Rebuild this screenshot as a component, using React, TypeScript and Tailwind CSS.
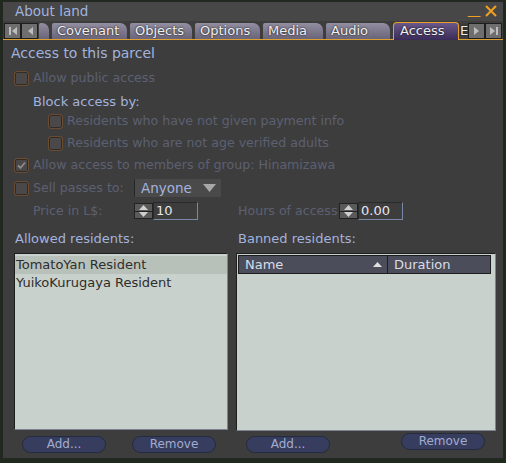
import React from "react";

const font = "font-['DejaVu_Sans',sans-serif]";

function Checkbox({ checked = false }: { checked?: boolean }) {
  return (
    <span className="w-[15px] h-[15px] shrink-0 rounded-[3px] border border-[#6c4c30] bg-[#4a4848] shadow-[inset_0_0_0_1px_#322a24] flex items-center justify-center">
      {checked && (
        <svg width="11" height="11" viewBox="0 0 11 11">
          <path d="M2 5.5 L4.5 8 L9 2.5" stroke="#8c8c8c" strokeWidth="1.8" fill="none" />
        </svg>
      )}
    </span>
  );
}

function Spinner() {
  return (
    <span className="w-[19px] h-[16px] flex flex-col shrink-0 border border-[#222]">
      <span className="flex-1 bg-[#5a5a5a] flex items-center justify-center border-b border-[#222]">
        <svg width="9" height="5" viewBox="0 0 9 5"><path d="M0 5 L4.5 0 L9 5Z" fill="#cfcfcf" /></svg>
      </span>
      <span className="flex-1 bg-[#5a5a5a] flex items-center justify-center">
        <svg width="9" height="5" viewBox="0 0 9 5"><path d="M0 0 L4.5 5 L9 0Z" fill="#cfcfcf" /></svg>
      </span>
    </span>
  );
}

function NumField({ value, w }: { value: string; w: string }) {
  return (
    <span className={`${w} h-[18px] border border-t-[#2a2a2a] border-l-[#2a2a2a] border-b-[#7a88a8] border-r-[#7a88a8] text-[13px] text-[#e6e6ee] pl-[2px] leading-[16px]`}>
      {value}
    </span>
  );
}

function ScrollBtn({ dir, end }: { dir: "l" | "r"; end?: boolean }) {
  return (
    <span className="w-[17px] h-[16px] bg-[#6e6e6e] border border-[#1e1e1e] flex items-center justify-center">
      <svg width="10" height="10" viewBox="0 0 10 10">
        {dir === "l" ? (
          <>
            {end && <rect x="1" y="1" width="2" height="8" fill="#bdbdbd" />}
            <path d={end ? "M9 1 L4 5 L9 9Z" : "M8 1 L3 5 L8 9Z"} fill="#bdbdbd" />
          </>
        ) : (
          <>
            <path d={end ? "M1 1 L6 5 L1 9Z" : "M2 1 L7 5 L2 9Z"} fill="#bdbdbd" />
            {end && <rect x="7" y="1" width="2" height="8" fill="#bdbdbd" />}
          </>
        )}
      </svg>
    </span>
  );
}

function Tab({ label, w, active }: { label: string; w: string; active?: boolean }) {
  if (active) {
    return (
      <span className={`${w} h-[18px] mt-[1px] shrink-0 rounded-t-[4px] border border-b-0 border-[#e8a02a] bg-gradient-to-b from-[#6a5888] to-[#3a2c58] text-[13px] text-[#eeeeee] leading-[16px] pl-[6px] [text-shadow:0_0_2px_#000]`}>
        {label}
      </span>
    );
  }
  return (
    <span className={`${w} h-[16px] mt-[2px] shrink-0 rounded-tr-[7px] rounded-tl-[2px] bg-gradient-to-b from-[#928ea0] to-[#6a6478] text-[13px] text-[#f0f0f0] leading-[16px] pl-[5px] overflow-hidden whitespace-nowrap [text-shadow:0_0_2px_#000]`}>
      {label}
    </span>
  );
}

function PillButton({ label, className = "" }: { label: string; className?: string }) {
  return (
    <span className={`w-[84px] h-[17px] rounded-full bg-[#373d5e] border border-[#262a40] text-[12px] leading-[15px] text-[#a2acd0] text-center ${className}`}>
      {label}
    </span>
  );
}

export default function App() {
  const disabled = "text-[#5c6072] text-[12.6px]";
  const label = "text-[#a3b3de]";
  return (
    <div className={`w-[506px] h-[463px] bg-[#1f2a1c] overflow-hidden ${font}`}>
      <div className="ml-[2px] mt-[1px] w-[502px] h-[458px] bg-[#3d3d3d] border border-[#262626] flex flex-col">
        {/* title bar */}
        <div className="h-[19px] bg-[#474747] flex items-center pl-[12px] pr-[6px]">
          <span className={`text-[13.5px] ${label} flex-1`}>About land</span>
          <span className="text-[#f0a020] text-[14px] leading-none mr-[4px] mt-[6px]">—</span>
          <svg width="12" height="12" viewBox="0 0 12 12" className="mb-[1px]">
            <path d="M1 1 L11 11 M11 1 L1 11" stroke="#f0a020" strokeWidth="2" />
          </svg>
        </div>

        {/* tabs */}
        <div className="h-[19px] flex items-start border-b border-[#e0a030] pl-[1px] pr-[1px]">
          <span className="flex mt-[2px]">
            <ScrollBtn dir="l" end />
            <ScrollBtn dir="l" />
          </span>
          <span className="flex gap-[3px] ml-[1px] flex-1">
            <Tab label="" w="w-[10px]" />
            <Tab label="Covenant" w="w-[75px]" />
            <Tab label="Objects" w="w-[62px]" />
            <Tab label="Options" w="w-[65px]" />
            <Tab label="Media" w="w-[60px]" />
            <Tab label="Audio" w="w-[64px]" />
            <Tab label="Access" w="w-[66px]" active />
            <span className="shrink-0 text-[13px] text-[#f0f0f0] mt-[2px] -ml-[2px] leading-[16px] [text-shadow:0_0_2px_#000]">E</span>
          </span>
          <span className="flex mt-[2px]">
            <ScrollBtn dir="r" />
            <ScrollBtn dir="r" end />
          </span>
        </div>

        {/* content */}
        <div className="flex flex-col text-[13px] pl-[8px]">
          <div className={`h-[18px] mt-[4px] flex items-center text-[14px] ${label}`}>Access to this parcel</div>
          <div className={`h-[18px] mt-[7px] flex items-center gap-[4px] pl-[3px] ${disabled}`}>
            <Checkbox /> Allow public access
          </div>
          <div className={`h-[18px] mt-[6px] flex items-center pl-[22px] ${label}`}>Block access by:</div>
          <div className={`h-[18px] mt-[1px] flex items-center gap-[4px] pl-[37px] ${disabled}`}>
            <Checkbox /> Residents who have not given payment info
          </div>
          <div className={`h-[18px] mt-[4px] flex items-center gap-[4px] pl-[37px] ${disabled}`}>
            <Checkbox /> Residents who are not age verified adults
          </div>
          <div className={`h-[18px] mt-[4px] flex items-center gap-[4px] pl-[3px] ${disabled}`}>
            <Checkbox checked /> Allow access to members of group: Hinamizawa
          </div>
          <div className={`h-[18px] mt-[5px] flex items-center pl-[3px] ${disabled}`}>
            <Checkbox />
            <span className="ml-[4px] w-[101px]">Sell passes to:</span>
            <span className="w-[87px] h-[18px] bg-[#4a4a4a] border-l border-[#262626] flex items-center pl-[6px] pr-[5px]">
              <span className={`flex-1 text-[13.5px] ${label}`}>Anyone</span>
              <svg width="13" height="8" viewBox="0 0 13 8"><path d="M0 0 L13 0 L6.5 8Z" fill="#a8a8a8" /></svg>
            </span>
          </div>
          <div className={`h-[18px] mt-[5px] flex items-center ${disabled}`}>
            <span className="ml-[22px] w-[101px]">Price in L$:</span>
            <Spinner />
            <NumField value="10" w="w-[45px]" />
            <span className="ml-[40px] w-[101px] whitespace-nowrap">Hours of access</span>
            <Spinner />
            <NumField value="0.00" w="w-[45px]" />
          </div>
          <div className={`h-[18px] mt-[10px] flex items-center ${label}`}>
            <span className="ml-[4px] w-[223px]">Allowed residents:</span>
            <span>Banned residents:</span>
          </div>

          {/* lists */}
          <div className="flex mt-[5px] ml-[3px]">
            <div className="w-[214px] h-[177px] bg-[#c8d1cb] border border-t-[#1e1e1e] border-l-[#1e1e1e] border-b-[#7c8494] border-r-[#7c8494] pt-[2px] text-[#2e2e2e]">
              <div className="h-[18px] bg-[#b8c0ba] pl-[1px] leading-[18px]">TomatoYan Resident</div>
              <div className="h-[18px] pl-[1px] leading-[18px]">YuikoKurugaya Resident</div>
            </div>
            <div className="ml-[8px] w-[260px] h-[178px] bg-[#c8d1cb] border border-t-[#1e1e1e] border-l-[#1e1e1e] border-b-[#7c8494] border-r-[#7c8494] pt-[1px] pl-[1px] pr-[4px]">
              <div className="h-[19px] flex bg-[#4b4e5a] border border-[#1e1e1e] text-[#d8dce8]">
                <span className="w-[149px] flex items-center pl-[6px] border-r border-[#1e1e1e]">
                  <span className="flex-1">Name</span>
                  <svg width="9" height="5" viewBox="0 0 9 5" className="mr-[5px]"><path d="M0 5 L4.5 0 L9 5Z" fill="#e0e0e0" /></svg>
                </span>
                <span className="flex items-center pl-[6px]">Duration</span>
              </div>
            </div>
          </div>

          {/* buttons */}
          <div className="flex items-start mt-[5px]">
            <PillButton label="Add..." className="ml-[11px]" />
            <PillButton label="Remove" className="ml-[26px]" />
            <PillButton label="Add..." className="ml-[30px]" />
            <PillButton label="Remove" className="ml-[71px] -mt-[3px]" />
          </div>
        </div>
      </div>
    </div>
  );
}
